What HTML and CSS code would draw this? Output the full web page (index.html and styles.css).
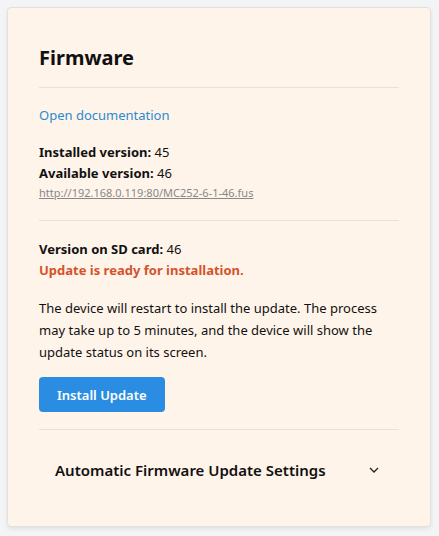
FILE: index.html
```html
<!DOCTYPE html>
<html lang="en">
<head>
<meta charset="utf-8">
<link rel="stylesheet" href="styles.css">
</head>
<body>
<div class="page">
  <section class="card">
    <h1 class="title">Firmware</h1>
    <hr class="divider">
    <a class="doc-link" href="#">Open documentation</a>
    <div class="versions">
      <div class="row"><b>Installed version:</b> 45</div>
      <div class="row"><b>Available version:</b> 46</div>
      <a class="file-link" href="#">http://192.168.0.119:80/MC252-6-1-46.fus</a>
    </div>
    <hr class="divider">
    <div class="sd">
      <div class="row"><b>Version on SD card:</b> 46</div>
      <div class="ready">Update is ready for installation.</div>
    </div>
    <p class="note">The device will restart to install the update. The process may take up to 5 minutes, and the device will show the update status on its screen.</p>
    <button class="btn">Install Update</button>
    <hr class="divider">
    <div class="accordion">
      <span class="acc-title">Automatic Firmware Update Settings</span>
      <svg class="chev" width="10" height="6" viewBox="0 0 10 6"><path d="M1 1 L5 5 L9 1" fill="none" stroke="#222" stroke-width="1.3"/></svg>
    </div>
  </section>
</div>
</body>
</html>
```
FILE: styles.css
```css
html, body { margin: 0; padding: 0; }
body {
  background: #f3f4f6;
  font-family: "Noto Sans", "Open Sans", sans-serif;
  color: #111;
  font-size: 13px;
}
.page { padding: 7px 8px 10px 7px; }
.card {
  background: #fff4ea;
  border: 1px solid #e4e1dd;
  border-radius: 4px;
  box-shadow: 0 2px 4px rgba(0,0,0,0.08);
  padding: 38px 31px 0 31px;
  height: 520px;
  box-sizing: border-box;
}
.title {
  margin: 0;
  font-size: 20px;
  font-weight: 700;
  line-height: 24px;
}
.divider {
  border: 0;
  border-top: 1px solid #e5e1e0;
  margin: 17px 0 0;
}
.doc-link {
  display: block;
  margin-top: 18px;
  color: #2a8bd0;
  text-decoration: none;
  line-height: 18px;
}
.versions { margin-top: 18px; }
.row { line-height: 21px; }
.row b { font-weight: 700; }
.file-link {
  display: block;
  font-size: 11px;
  color: #888;
  line-height: 18px;
}
.versions + .divider { margin-top: 18px; }
.sd { margin-top: 18px; }
.ready { color: #d4532a; font-weight: 700; line-height: 21px; }
.note { margin: 16px 0 0; line-height: 22px; }
.btn {
  margin-top: 14px;
  background: #2a8de2;
  color: #fff;
  border: 0;
  border-radius: 4px;
  font-family: inherit;
  font-size: 13px;
  font-weight: 600;
  padding: 0 18px;
  height: 35px;
}
.btn + .divider { margin-top: 17px; }
.accordion {
  display: flex;
  align-items: center;
  justify-content: space-between;
  padding: 30px 20px 0 16px;
}
.acc-title { font-size: 15px; font-weight: 600; }
.chev { display: block; }
```
